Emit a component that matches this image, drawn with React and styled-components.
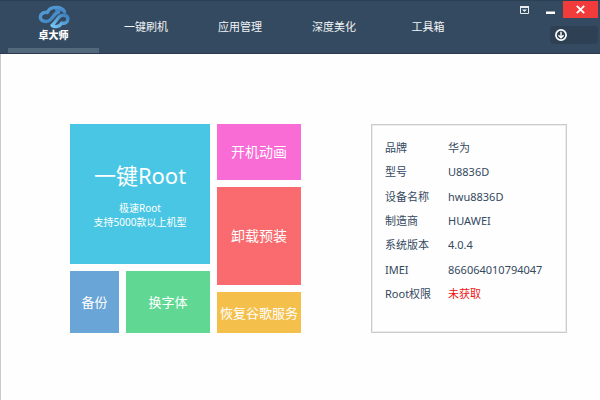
import React from "react";
import styled, { createGlobalStyle } from "styled-components";

const GlobalStyle = createGlobalStyle`
  * {
    box-sizing: border-box;
  }

  body {
    margin: 0;
    background-color: #fefefe;
    color: #34495e;
    font-family: "Noto Sans", "Noto Sans CJK SC", sans-serif;
    font-size: 11px;
  }

  button {
    padding: 0;
    border: 0;
    color: #fff;
    font-family: inherit;
    cursor: pointer;
  }
`;

const Window = styled.div`
  display: flex;
  flex-direction: column;
  min-height: 100vh;
  border-left: 1px solid #c8ccd0;
`;

const Header = styled.header`
  display: flex;
  height: 54px;
  margin-left: -1px;
  border-top: 1px solid #2c4054;
  border-bottom: 1px solid #2b3a52;
  background-color: #344a60;
`;

const Brand = styled.a`
  display: flex;
  flex-direction: column;
  align-items: center;
  width: 91px;
  margin-left: 8px;
  padding-top: 4px;
  border-bottom: 5px solid #53687b;
  color: #fff;
  font-size: 10px;
  font-weight: 900;
  line-height: 12px;
  text-decoration: none;
`;

const Nav = styled.nav`
  display: flex;
  flex: 1;
  align-items: center;
  max-width: 376px;
`;

const NavLink = styled.a`
  flex: 1;
  color: #f2f5f7;
  font-size: 11px;
  line-height: 16px;
  text-align: center;
  text-decoration: none;
`;

const Side = styled.div`
  display: flex;
  flex-direction: column;
  align-items: flex-end;
  gap: 8px;
  margin-left: auto;
  padding-right: 2px;
`;

const Controls = styled.div`
  display: flex;
`;

const Control = styled.button`
  display: flex;
  align-items: center;
  justify-content: center;
  width: ${(props) => (props.$close ? "35px" : "26px")};
  height: 17px;
  background-color: ${(props) => (props.$close ? "#f23c3c" : "transparent")};
`;

const DownloadButton = styled.button`
  display: flex;
  align-items: center;
  width: 48px;
  height: 18px;
  padding-left: 5px;
  border-radius: 4px;
  background-color: #2e4053;
`;

const Main = styled.main`
  display: flex;
  justify-content: space-between;
  padding: 70px 33px 0 69px;
`;

const Tiles = styled.div`
  display: flex;
  gap: 7px;
`;

const Column = styled.div`
  display: flex;
  flex-direction: column;
  gap: 7px;
  width: ${(props) => props.$width};
`;

const Row = styled.div`
  display: flex;
  gap: 7px;
`;

const Tile = styled.button`
  flex: ${(props) => props.$flex || "none"};
  height: ${(props) => props.$height};
  background-color: ${(props) => props.$color};
  font-size: ${(props) => props.$size || "13px"};
  line-height: 20px;
  white-space: nowrap;
`;

const TileTitle = styled.span`
  display: block;
  margin-bottom: 10px;
  font-size: 22px;
  line-height: 32px;
`;

const TileNote = styled.span`
  display: block;
  font-size: 10px;
  line-height: 14px;
`;

const Info = styled.dl`
  display: flex;
  flex-direction: column;
  justify-content: space-between;
  width: 196px;
  margin: 0;
  padding: 15px 13px 30px;
  border: 1px solid #cbcbcb;
  box-shadow: inset 0 0 0 1px #ededed;
`;

const InfoRow = styled.div`
  display: flex;
  line-height: 16px;
`;

const Label = styled.dt`
  width: 63px;
`;

const Value = styled.dd`
  margin: 0;
  color: ${(props) => (props.$warning ? "#f01414" : "inherit")};
`;

const navItems = ["一键刷机", "应用管理", "深度美化", "工具箱"];

const device = [
  { label: "品牌", value: "华为" },
  { label: "型号", value: "U8836D" },
  { label: "设备名称", value: "hwu8836D" },
  { label: "制造商", value: "HUAWEI" },
  { label: "系统版本", value: "4.0.4" },
  { label: "IMEI", value: "866064010794047" },
  { label: "Root权限", value: "未获取", warning: true },
];

function Logo() {
  return (
    <svg width="32" height="24" viewBox="0 0 96 72" fill="none" aria-hidden="true">
      <defs>
        <linearGradient id="cloudTop" x1="0" y1="0" x2="1" y2="1">
          <stop offset="0" stopColor="#5aa3dc" />
          <stop offset="1" stopColor="#3a7cba" />
        </linearGradient>
        <linearGradient id="cloudBottom" x1="0" y1="1" x2="1" y2="0">
          <stop offset="0" stopColor="#79c4f2" />
          <stop offset="1" stopColor="#3a7fbe" />
        </linearGradient>
      </defs>
      <g strokeLinecap="round" strokeLinejoin="round" strokeWidth="10">
        <path
          d="M80 21C72 3 36 2 28 23C18 20 8 26 7 36C7 49 24 53 35 46C46 39 48 24 62 21"
          stroke="url(#cloudTop)"
        />
        <path
          d="M42 61C51 68 66 65 71 54C82 57 90 50 90 41C89 29 73 28 65 34C57 40 52 54 42 61"
          stroke="url(#cloudBottom)"
        />
      </g>
      <path d="M50 13C60 9 70 12 76 20C67 17 60 18 54 23Z" fill="#4288c6" />
    </svg>
  );
}

export default function App() {
  return (
    <Window>
      <GlobalStyle />
      <Header>
        <Brand href="#">
          <Logo />
          卓大师
        </Brand>
        <Nav>
          {navItems.map((item) => (
            <NavLink key={item} href="#">
              {item}
            </NavLink>
          ))}
        </Nav>
        <Side>
          <Controls>
            <Control aria-label="菜单">
              <svg width="9" height="8" viewBox="0 0 9 8">
                <path d="M0.5 0.5H8.5V7.5H0.5Z" fill="none" stroke="#e8ecef" />
                <path d="M0 0H9V2H0ZM2 3.5H7L4.5 6Z" fill="#e8ecef" />
              </svg>
            </Control>
            <Control aria-label="最小化">
              <svg width="9" height="8" viewBox="0 0 9 8">
                <path d="M0 5.5H9V8H0Z" fill="#fff" />
              </svg>
            </Control>
            <Control $close aria-label="关闭">
              <svg width="9" height="9" viewBox="0 0 9 9">
                <path d="M0.8 0.8L8.2 8.2M8.2 0.8L0.8 8.2" stroke="#fff" strokeWidth="1.9" />
              </svg>
            </Control>
          </Controls>
          <DownloadButton aria-label="下载">
            <svg width="12" height="12" viewBox="0 0 12 12" fill="none" stroke="#fff">
              <circle cx="6" cy="6" r="5.1" strokeWidth="1.7" />
              <path d="M6 2.8V8.8M3.4 6.2L6 8.8L8.6 6.2" strokeWidth="1.4" />
            </svg>
          </DownloadButton>
        </Side>
      </Header>
      <Main>
        <Tiles>
          <Column $width="140px">
            <Tile $height="140px" $color="#48c6e3">
              <TileTitle>一键Root</TileTitle>
              <TileNote>极速Root</TileNote>
              <TileNote>支持5000款以上机型</TileNote>
            </Tile>
            <Row>
              <Tile $flex="7" $height="62px" $color="#6aa5d8">
                备份
              </Tile>
              <Tile $flex="12" $height="62px" $color="#60d893">
                换字体
              </Tile>
            </Row>
          </Column>
          <Column $width="84px">
            <Tile $height="56px" $color="#f96bd5" $size="14px">
              开机动画
            </Tile>
            <Tile $height="98px" $color="#f96b6e" $size="14px">
              卸载预装
            </Tile>
            <Tile $height="41px" $color="#f5bf4b">
              恢复谷歌服务
            </Tile>
          </Column>
        </Tiles>
        <Info>
          {device.map(({ label, value, warning }) => (
            <InfoRow key={label}>
              <Label>{label}</Label>
              <Value $warning={warning}>{value}</Value>
            </InfoRow>
          ))}
        </Info>
      </Main>
    </Window>
  );
}
